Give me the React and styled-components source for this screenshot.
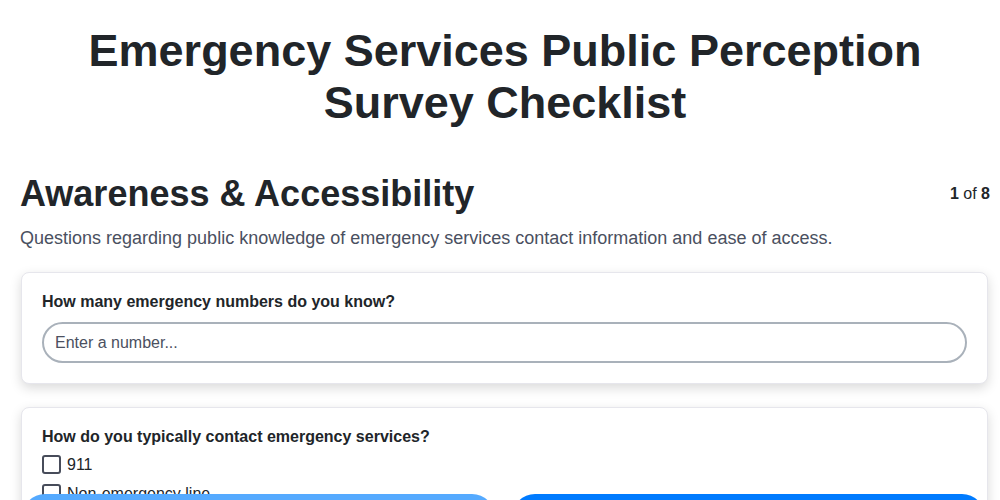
import React, { useState } from 'react';
import styled, { createGlobalStyle } from 'styled-components';

const GlobalStyle = createGlobalStyle`
	* { box-sizing: border-box; }
	body {
		margin: 0;
		background: #ffffff;
		font-family: "Liberation Sans", Arial, sans-serif;
		color: #212529;
	}
`;

const Page = styled.div`
	padding: 0 10px 80px 20px;
`;

const Title = styled.h1`
	margin: 25px 0 0;
	font-size: 45px;
	line-height: 52px;
	font-weight: 700;
	text-align: center;
	color: #212529;
`;

const SectionHead = styled.div`
	display: flex;
	justify-content: space-between;
	align-items: center;
	margin-top: 44px;

	h2 {
		margin: 0;
		font-size: 36px;
		font-weight: 700;
		color: #212529;
	}
`;

const Progress = styled.div`
	font-size: 16px;
	color: #212529;

	b { font-weight: 700; }
`;

const Description = styled.p`
	margin: 13px 0 23px;
	font-size: 18px;
	color: #4a5060;
`;

const Card = styled.div`
	margin: 0 2px 23px 1px;
	padding: 20px;
	background: #fff;
	border: 1px solid #e6e6ec;
	border-radius: 8px;
	box-shadow: 0 4px 12px rgba(0, 0, 0, 0.15);
`;

const Label = styled.div`
	font-size: 16px;
	font-weight: 700;
	color: #212529;
	margin-bottom: 11px;
`;

const Input = styled.input`
	display: block;
	width: 100%;
	height: 41px;
	padding: 0 11px;
	border: 2px solid #a9b1ba;
	border-radius: 21px;
	font-family: inherit;
	font-size: 16px;
	color: #333;
	outline: none;

	&::placeholder { color: #4b5060; }
`;

const OptionList = styled.div`
	display: flex;
	flex-direction: column;
	gap: 4px;
	margin-top: -5px;
`;

const Option = styled.label`
	display: flex;
	align-items: center;
	gap: 6px;
	height: 25px;
	font-size: 16px;
	color: #212529;
`;

const Box = styled.span`
	width: 19px;
	height: 19px;
	border: 2px solid #474c5a;
	border-radius: 3px;
	background: ${p => (p.checked ? '#007bff' : '#fff')};
`;

const NavBar = styled.div`
	position: fixed;
	left: 0;
	right: 0;
	bottom: -40px;
	display: flex;
	gap: 17px;
	padding: 0 15px 0 22px;
`;

const NavButton = styled.button`
	flex: 1;
	height: 46px;
	border: none;
	border-radius: 23px;
	background: ${p => (p.primary ? '#007bff' : '#55aaff')};
	color: #fff;
	font-family: inherit;
	font-size: 16px;
	font-weight: 700;
`;

const contactOptions = ['911', 'Non-emergency line', 'Mobile app', 'Text message'];

const App = () => {
	const [checked, setChecked] = useState({});

	const toggle = (opt) => setChecked({ ...checked, [opt]: !checked[opt] });

	return (
		<Page>
			<GlobalStyle />
			<Title>Emergency Services Public Perception Survey Checklist</Title>

			<SectionHead>
				<h2>Awareness &amp; Accessibility</h2>
				<Progress><b>1</b> of <b>8</b></Progress>
			</SectionHead>
			<Description>
				Questions regarding public knowledge of emergency services contact information and ease of access.
			</Description>

			<Card>
				<Label>How many emergency numbers do you know?</Label>
				<Input type='text' placeholder='Enter a number...' />
			</Card>

			<Card>
				<Label>How do you typically contact emergency services?</Label>
				<OptionList>
					{contactOptions.map(opt => (
						<Option key={opt} onClick={() => toggle(opt)}>
							<Box checked={checked[opt]} />
							{opt}
						</Option>
					))}
				</OptionList>
			</Card>

			<NavBar>
				<NavButton>Previous</NavButton>
				<NavButton primary>Next</NavButton>
			</NavBar>
		</Page>
	);
};

export default App;
